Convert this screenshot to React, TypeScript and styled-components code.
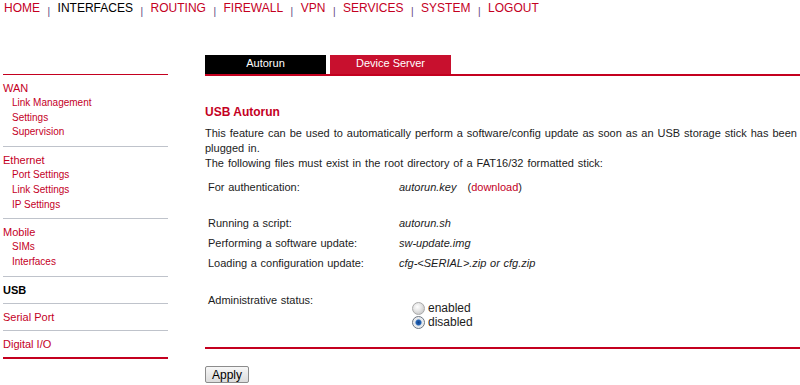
import React from 'react'
import styled, { createGlobalStyle } from 'styled-components'

const RED = '#c4001f'
const TEXT = '#1c1c1c'

const GlobalStyle = createGlobalStyle`
  html, body {
    margin: 0;
    padding: 0;
    background: #ffffff;
    font-family: "Liberation Sans", Arial, sans-serif;
    color: ${TEXT};
  }
`

const Page = styled.div`
  width: 800px;
  height: 385px;
  overflow: hidden;
  padding-left: 3px;
  box-sizing: border-box;
`

const TopNav = styled.nav`
  display: flex;
  align-items: baseline;
  height: 15px;
  padding: 1px 0 0 1px;
  font-size: 12px;
  line-height: 15px;
`

const NavLink = styled.a<{ $active?: boolean }>`
  color: ${(p) => (p.$active ? '#000000' : RED)};
  text-decoration: none;
`

const NavSep = styled.span`
  font-size: 10px;
  color: #5b3f7c;
  margin: 0 7.5px;
  position: relative;
  top: 3px;
`

const Main = styled.div`
  display: grid;
  grid-template-columns: 165px 595px;
  column-gap: 37px;
  align-items: start;
  margin-top: 39px;
`

const Sidebar = styled.aside`
  margin-top: 19px;
  border-top: 1px solid ${RED};
  border-bottom: 2px solid ${RED};
`

const Group = styled.div`
  padding: 6px 0 6px;
  & + & {
    border-top: 1px solid #bfc3cb;
  }
`

const GroupTitle = styled.a<{ $current?: boolean }>`
  display: block;
  font-size: 11px;
  line-height: 14px;
  color: ${(p) => (p.$current ? '#000000' : RED)};
  font-weight: ${(p) => (p.$current ? 700 : 400)};
  text-decoration: none;
`

const SubLink = styled.a`
  display: block;
  font-size: 10px;
  line-height: 14.7px;
  padding-left: 9px;
  color: ${RED};
  text-decoration: none;
  ${GroupTitle} + & {
    margin-top: 1px;
  }
`

const Content = styled.section`
  display: flex;
  flex-direction: column;
`

const Tabs = styled.div`
  display: flex;
  gap: 4px;
  border-bottom: 2px solid ${RED};
`

const Tab = styled.div<{ $active?: boolean }>`
  width: 121px;
  height: 19px;
  line-height: 17px;
  text-align: center;
  font-size: 11px;
  color: #ffffff;
  background: ${(p) => (p.$active ? '#000000' : '#c8102e')};
`

const Heading = styled.h2`
  margin: 29px 0 0;
  font-size: 12px;
  line-height: 15px;
  font-weight: 700;
  color: ${RED};
`

const Para = styled.p`
  margin: 6px 0 0;
  font-size: 11px;
  line-height: 15px;
  word-spacing: 0.9px;
  color: ${TEXT};
`

const FileTable = styled.div`
  display: grid;
  grid-template-columns: 191px 1fr;
  margin-top: 6px;
  padding-left: 3px;
  font-size: 11px;
  word-spacing: 0.6px;
`

const Label = styled.div<{ $top?: boolean }>`
  line-height: 20px;
  align-self: ${(p) => (p.$top ? 'start' : 'auto')};
`

const Value = styled.div`
  line-height: 20px;
  font-style: italic;
`

const Spacer = styled.div<{ $h: number }>`
  grid-column: 1 / -1;
  height: ${(p) => p.$h}px;
`

const Download = styled.span`
  font-style: normal;
  margin-left: 11px;
  a {
    color: ${RED};
    text-decoration: none;
  }
`

const RadioGroup = styled.div`
  padding: 11px 0 0 13px;
`

const RadioRow = styled.label`
  display: flex;
  align-items: center;
  gap: 3px;
  height: 14px;
  font-size: 12px;
`

const RadioDot = styled.span<{ $checked?: boolean }>`
  width: 11px;
  height: 11px;
  border-radius: 50%;
  border: 1px solid ${(p) => (p.$checked ? '#6b7480' : '#a9a9a9')};
  background: ${(p) =>
    p.$checked
      ? 'radial-gradient(circle, #0e3f8a 0, #2466b8 2.5px, #dfe4ea 3.5px, #f2f2f2 6px)'
      : 'radial-gradient(circle at 40% 35%, #ffffff 0, #e6e6e6 4px, #cfcfcf 7px)'};
`

const Divider = styled.div`
  margin-top: 18px;
  height: 2px;
  background: ${RED};
`

const ApplyButton = styled.button`
  margin-top: 17px;
  align-self: flex-start;
  width: 44px;
  height: 17px;
  padding: 0;
  font-family: "Liberation Sans", Arial, sans-serif;
  font-size: 12px;
  color: #000000;
  border: 1px solid #8c8c8c;
  border-radius: 2px;
  background: linear-gradient(#f7f7f7, #dcdcdc);
`

const navItems = ['HOME', 'INTERFACES', 'ROUTING', 'FIREWALL', 'VPN', 'SERVICES', 'SYSTEM', 'LOGOUT']

const menu: { title: string; items: string[]; current?: boolean }[] = [
  { title: 'WAN', items: ['Link Management', 'Settings', 'Supervision'] },
  { title: 'Ethernet', items: ['Port Settings', 'Link Settings', 'IP Settings'] },
  { title: 'Mobile', items: ['SIMs', 'Interfaces'] },
  { title: 'USB', items: [], current: true },
  { title: 'Serial Port', items: [] },
  { title: 'Digital I/O', items: [] },
]

const files = [
  ['Running a script:', 'autorun.sh'],
  ['Performing a software update:', 'sw-update.img'],
  ['Loading a configuration update:', 'cfg-<SERIAL>.zip or cfg.zip'],
]

export default function App() {
  return (
    <Page>
      <GlobalStyle />
      <TopNav>
        {navItems.map((item, i) => (
          <React.Fragment key={item}>
            {i > 0 && <NavSep>|</NavSep>}
            <NavLink href="#" $active={item === 'INTERFACES'}>
              {item}
            </NavLink>
          </React.Fragment>
        ))}
      </TopNav>
      <Main>
        <Sidebar>
          {menu.map((g) => (
            <Group key={g.title}>
              <GroupTitle href="#" $current={g.current}>
                {g.title}
              </GroupTitle>
              {g.items.map((s) => (
                <SubLink href="#" key={s}>
                  {s}
                </SubLink>
              ))}
            </Group>
          ))}
        </Sidebar>
        <Content>
          <Tabs>
            <Tab $active>Autorun</Tab>
            <Tab>Device Server</Tab>
          </Tabs>
          <Heading>USB Autorun</Heading>
          <Para>
            This feature can be used to automatically perform a software/config update as soon as an USB storage
            stick has been plugged in.
            <br />
            The following files must exist in the root directory of a FAT16/32 formatted stick:
          </Para>
          <FileTable>
            <Label>For authentication:</Label>
            <Value>
              autorun.key
              <Download>
                (<a href="#">download</a>)
              </Download>
            </Value>
            <Spacer $h={16} />
            {files.map(([l, v]) => (
              <React.Fragment key={l}>
                <Label>{l}</Label>
                <Value>{v}</Value>
              </React.Fragment>
            ))}
            <Spacer $h={17} />
            <Label $top>Administrative status:</Label>
            <RadioGroup>
              <RadioRow>
                <RadioDot />
                enabled
              </RadioRow>
              <RadioRow>
                <RadioDot $checked />
                disabled
              </RadioRow>
            </RadioGroup>
          </FileTable>
          <Divider />
          <ApplyButton>Apply</ApplyButton>
        </Content>
      </Main>
    </Page>
  )
}
